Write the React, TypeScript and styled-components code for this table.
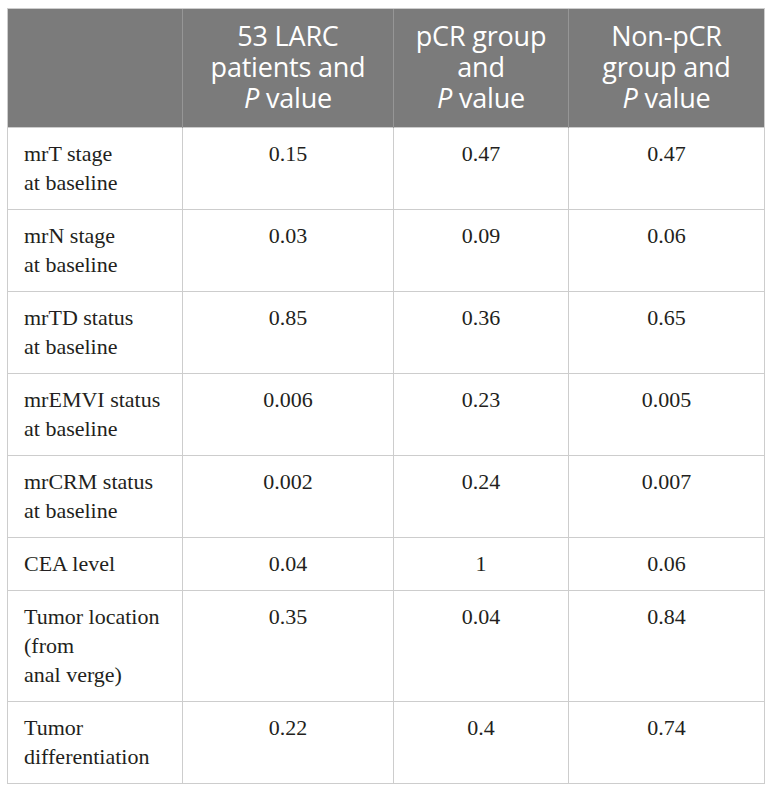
import styled, { createGlobalStyle } from 'styled-components';

const GlobalStyle = createGlobalStyle`
  body {
    margin: 0;
    background: #ffffff;
    font-family: "Liberation Serif", "DejaVu Serif", serif;
  }
`;

interface RowData {
  label: string[];
  values: string[];
}

const rows: RowData[] = [
  { label: ['mrT stage', 'at baseline'], values: ['0.15', '0.47', '0.47'] },
  { label: ['mrN stage', 'at baseline'], values: ['0.03', '0.09', '0.06'] },
  { label: ['mrTD status', 'at baseline'], values: ['0.85', '0.36', '0.65'] },
  { label: ['mrEMVI status', 'at baseline'], values: ['0.006', '0.23', '0.005'] },
  { label: ['mrCRM status', 'at baseline'], values: ['0.002', '0.24', '0.007'] },
  { label: ['CEA level'], values: ['0.04', '1', '0.06'] },
  { label: ['Tumor location', '(from', 'anal verge)'], values: ['0.35', '0.04', '0.84'] },
  { label: ['Tumor', 'differentiation'], values: ['0.22', '0.4', '0.74'] },
];

const headers: string[][] = [
  ['53 LARC', 'patients and'],
  ['pCR group', 'and'],
  ['Non-pCR', 'group and'],
];

const colWidths = [175, 211, 175, 196];

const App = () => {
  return (
    <Page>
      <GlobalStyle />
      <Table>
        <colgroup>
          {colWidths.map((w, i) => (
            <col key={i} style={{ width: w }} />
          ))}
        </colgroup>
        <thead>
          <tr>
            <HeadCell />
            {headers.map((lines, i) => (
              <HeadCell key={i}>
                {lines.map((l) => (
                  <span key={l}>
                    {l}
                    <br />
                  </span>
                ))}
                <em>P</em> value
              </HeadCell>
            ))}
          </tr>
        </thead>
        <tbody>
          {rows.map((row) => (
            <tr key={row.label.join(' ')}>
              <BodyCell $align="left">
                {row.label.map((l, i) => (
                  <span key={l}>
                    {i > 0 && <br />}
                    {l}
                  </span>
                ))}
              </BodyCell>
              {row.values.map((v, i) => (
                <BodyCell key={i} $align="center">
                  {v}
                </BodyCell>
              ))}
            </tr>
          ))}
        </tbody>
      </Table>
    </Page>
  );
};

export default App;

const Page = styled.div`
  padding: 8px 0 8px 7px;
  width: 772px;
  box-sizing: border-box;
`;

const Table = styled.table`
  width: 758px;
  table-layout: fixed;
  border-collapse: collapse;
  border: 1px solid #cdcdcd;
  font-family: "Liberation Serif", "DejaVu Serif", serif;
`;

const HeadCell = styled.th`
  background: #7b7b7b;
  color: #ffffff;
  font-family: "Open Sans", "Liberation Sans", sans-serif;
  font-weight: 400;
  font-size: 27px;
  line-height: 31px;
  letter-spacing: -0.2px;
  text-align: center;
  vertical-align: middle;
  padding: 11px 8px 14px;
  border-left: 1px solid #969696;
  border-top: 1px solid #cdcdcd;

  &:first-child {
    border-left: 1px solid #cdcdcd;
  }

  em {
    font-style: italic;
  }
`;

const BodyCell = styled.td<{ $align: 'left' | 'center' }>`
  font-family: "Liberation Serif", "DejaVu Serif", serif;
  font-size: 22px;
  line-height: 29px;
  color: #231f20;
  text-align: ${(props) => props.$align};
  vertical-align: top;
  padding: 11px 16px 12px;
  border: 1px solid #cdcdcd;
`;
